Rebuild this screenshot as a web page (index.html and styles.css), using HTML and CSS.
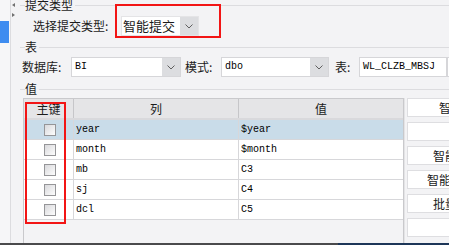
FILE: index.html
```html
<!DOCTYPE html>
<html lang="zh-CN">
<head>
    <meta charset="UTF-8">
    <meta name="viewport" content="width=device-width, initial-scale=1.0">
    <title>提交设置</title>
    <link rel="stylesheet" href="styles.css">
</head>
<body>
    <div class="page">
        <div class="screen">
            <div class="side">
                <span class="side-tab"></span>
            </div>
            <div class="gutter">
                <span class="arrow arrow-left"></span>
                <span class="arrow arrow-right"></span>
            </div>
            <div class="content">
                <div class="group-title group-first"><span>提交类型</span></div>
                <div class="form-row row-type">
                    <span class="label label-type">选择提交类型:</span>
                    <div class="combo combo-type">
                        <span class="combo-text">智能提交</span>
                        <span class="combo-btn">
                            <svg width="8" height="5" viewBox="0 0 8 5"><polyline points="0.5,0.5 4,4 7.5,0.5" fill="none" stroke="#5f5f5f" stroke-width="1"/></svg>
                        </span>
                    </div>
                </div>

                <div class="group-title"><span>表</span></div>
                <div class="form-row row-table">
                    <span class="label label-db">数据库:</span>
                    <div class="combo combo-db">
                        <span class="combo-text mono">BI</span>
                        <span class="combo-btn">
                            <svg width="8" height="5" viewBox="0 0 8 5"><polyline points="0.5,0.5 4,4 7.5,0.5" fill="none" stroke="#5f5f5f" stroke-width="1"/></svg>
                        </span>
                    </div>
                    <span class="label label-schema">模式:</span>
                    <div class="combo combo-schema">
                        <span class="combo-text mono">dbo</span>
                        <span class="combo-btn">
                            <svg width="8" height="5" viewBox="0 0 8 5"><polyline points="0.5,0.5 4,4 7.5,0.5" fill="none" stroke="#5f5f5f" stroke-width="1"/></svg>
                        </span>
                    </div>
                    <span class="label label-tbl">表:</span>
                    <div class="field mono">WL_CLZB_MBSJ</div>
                    <div class="field field-more"></div>
                </div>

                <div class="group-title"><span>值</span></div>
                <div class="value-area">
                    <div class="table-pane">
                        <div class="grid-head">
                            <div class="cell">主键</div>
                            <div class="cell">列</div>
                            <div class="cell">值</div>
                        </div>
                        <div class="grid-row selected">
                            <div class="cell cell-key"><span class="check"></span></div>
                            <div class="cell mono">year</div>
                            <div class="cell mono">$year</div>
                        </div>
                        <div class="grid-row">
                            <div class="cell cell-key"><span class="check"></span></div>
                            <div class="cell mono">month</div>
                            <div class="cell mono">$month</div>
                        </div>
                        <div class="grid-row">
                            <div class="cell cell-key"><span class="check"></span></div>
                            <div class="cell mono">mb</div>
                            <div class="cell mono">C3</div>
                        </div>
                        <div class="grid-row">
                            <div class="cell cell-key"><span class="check"></span></div>
                            <div class="cell mono">sj</div>
                            <div class="cell mono">C4</div>
                        </div>
                        <div class="grid-row">
                            <div class="cell cell-key"><span class="check"></span></div>
                            <div class="cell mono">dcl</div>
                            <div class="cell mono">C5</div>
                        </div>
                    </div>
                    <div class="button-col">
                        <button type="button">智能添加字段</button>
                        <button type="button">添加字段</button>
                        <button type="button">智能添加单元格</button>
                        <button type="button">智能添加单元格组</button>
                        <button type="button">批量修改单元格</button>
                        <button type="button">删除字段</button>
                    </div>
                </div>
            </div>
        </div>
        <div class="taskbar">
            <span class="taskbar-left"></span>
            <span class="taskbar-right"></span>
        </div>

        <!-- red annotation boxes -->
        <div class="mark mark-type"></div>
        <div class="mark mark-key"></div>
    </div>
</body>
</html>
```

FILE: styles.css
```css
* {
    box-sizing: border-box;
}
body {
    margin: 0;
    width: 449px;
    height: 245px;
    overflow: hidden;
    font-family: "Noto Sans CJK SC", sans-serif;
    font-size: 12px;
    color: #1b1b1b;
    background-color: #f3f3f5;
}
.page {
    position: relative;
    height: 245px;
}
.screen {
    display: flex;
    height: 243px;
    overflow: hidden;
}
.mono {
    font-family: "Liberation Mono", monospace;
    font-size: 10px;
    color: #000;
}

/* left strip */
.side {
    width: 11px;
    flex: none;
    padding-top: 21px;
    background-color: #f6f6f8;
    border-right: 1px solid #dcdcdf;
}
.side-tab {
    display: block;
    width: 9px;
    height: 22px;
    background-color: #3e8cf0;
}
.gutter {
    width: 9px;
    flex: none;
    display: flex;
    flex-direction: column;
    gap: 6px;
    padding: 3px 0 0 1px;
}
.arrow {
    width: 0;
    height: 0;
    border-top: 2.5px solid transparent;
    border-bottom: 2.5px solid transparent;
}
.arrow-left {
    border-right: 3px solid #707070;
}
.arrow-right {
    border-left: 3px solid #707070;
}

.content {
    flex: 1;
    min-width: 0;
    overflow: hidden;
}

/* titled groups */
.group-title {
    display: flex;
    align-items: center;
    height: 14px;
    line-height: 14px;
    white-space: nowrap;
}
.group-title::before {
    content: "";
    width: 5px;
    height: 1px;
    background-color: #dcdcdf;
}
.group-title::after {
    content: "";
    flex: 1;
    height: 1px;
    margin-left: 2px;
    background-color: #dcdcdf;
}
.group-first {
    margin-top: -2px;
}

.form-row {
    display: flex;
    align-items: center;
    height: 28px;
    white-space: nowrap;
}
.row-type {
    padding-left: 13px;
}
.row-table {
    align-items: flex-start;
    padding: 3px 0 0 2px;
}
.label {
    flex: none;
    line-height: 20px;
}
.label-type {
    width: 88px;
}
.label-db {
    width: 49px;
}
.label-schema {
    width: 36px;
    margin-left: 4px;
}
.label-tbl {
    width: 24px;
    margin-left: 6px;
}

.combo {
    display: flex;
    flex: none;
    height: 20px;
    background-color: #fff;
    border: 1px solid #d6d6d9;
}
.combo-type {
    width: 78px;
    border-color: #e4e4e6;
}
.combo-type .combo-text {
    font-size: 13px;
    padding-left: 1px;
}
.combo-db {
    width: 110px;
}
.combo-schema {
    width: 108px;
}
.combo-text {
    flex: 1;
    padding-left: 3px;
    line-height: 18px;
}
.combo-btn {
    width: 18px;
    display: flex;
    align-items: center;
    justify-content: center;
    background-color: #dcdde0;
}
.field {
    flex: none;
    width: 88px;
    height: 20px;
    padding-left: 3px;
    line-height: 18px;
    background-color: #fff;
    border: 1px solid #d6d6d9;
}
.field-more {
    width: 20px;
}

/* value table */
.value-area {
    display: flex;
    height: 145px;
    margin-top: 2px;
    padding-left: 3px;
}
.table-pane {
    width: 381px;
    flex: none;
    background-color: #f3f3f5;
    border: 1px solid #c9c9cc;
    border-bottom: none;
}
.grid-head,
.grid-row {
    display: grid;
    grid-template-columns: 50px 165px 164px;
}
.grid-head {
    height: 21px;
    background-color: #e5e5e7;
    border-bottom: 2px solid #d9d9dc;
}
.grid-head .cell {
    text-align: center;
    line-height: 19px;
    border-right: 1px solid #c6c6c9;
}
.grid-head .cell:last-child {
    border-right: none;
}
.grid-row {
    height: 20px;
    background-color: #fff;
    border-bottom: 1px solid #d7d7da;
}
.grid-row.selected {
    background-color: #c9dce9;
}
.grid-row .cell {
    padding-left: 2px;
    line-height: 19px;
    border-right: 1px solid #d7d7da;
}
.grid-row .cell:last-child {
    border-right: none;
}
.cell-key {
    display: flex;
    align-items: center;
    justify-content: center;
}
.check {
    width: 12px;
    height: 12px;
    border: 1px solid #959598;
    background: linear-gradient(135deg, #d9d9dc, #fdfdfd);
}

.button-col {
    flex: none;
    width: 140px;
    display: flex;
    flex-direction: column;
    gap: 5px;
    padding-left: 2px;
    border-left: 1px solid #e4e4e6;
}
.button-col button {
    width: 136px;
    height: 19px;
    padding: 0;
    font-family: inherit;
    font-size: 12px;
    color: #1b1b1b;
    line-height: 17px;
    text-align: center;
    white-space: nowrap;
    background-color: #fff;
    border: 1px solid #dedee1;
}

.taskbar {
    display: flex;
    height: 2px;
}
.taskbar-left {
    width: 338px;
    background-color: #4a4a4c;
}
.taskbar-right {
    flex: 1;
    background-color: #1d3658;
}

.mark {
    position: absolute;
    border: 2px solid #f21515;
}
.mark-type {
    left: 115px;
    top: 4px;
    width: 106px;
    height: 34px;
}
.mark-key {
    left: 25px;
    top: 102px;
    width: 41px;
    height: 122px;
}
```
